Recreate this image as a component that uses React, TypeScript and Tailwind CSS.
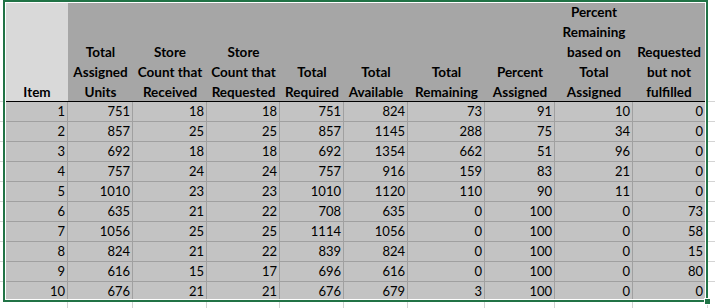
const colW = ["w-[62px]", "w-[65px]", "w-[74px]", "w-[73px]", "w-[64px]", "w-[64px]", "w-[77px]", "w-[70px]", "w-[78px]", "w-[72px]"];

const headers: string[][] = [
  ["Item"],
  ["Total", "Assigned", "Units"],
  ["Store", "Count that", "Received"],
  ["Store", "Count that", "Requested"],
  ["Total", "Required"],
  ["Total", "Available"],
  ["Total", "Remaining"],
  ["Percent", "Assigned"],
  ["Percent", "Remaining", "based on", "Total", "Assigned"],
  ["Requested", "but not", "fulfilled"],
];

const rows: number[][] = [
  [1, 751, 18, 18, 751, 824, 73, 91, 10, 0],
  [2, 857, 25, 25, 857, 1145, 288, 75, 34, 0],
  [3, 692, 18, 18, 692, 1354, 662, 51, 96, 0],
  [4, 757, 24, 24, 757, 916, 159, 83, 21, 0],
  [5, 1010, 23, 23, 1010, 1120, 110, 90, 11, 0],
  [6, 635, 21, 22, 708, 635, 0, 100, 0, 73],
  [7, 1056, 25, 25, 1114, 1056, 0, 100, 0, 58],
  [8, 824, 21, 22, 839, 824, 0, 100, 0, 15],
  [9, 616, 15, 17, 696, 616, 0, 100, 0, 80],
  [10, 676, 21, 21, 676, 679, 3, 100, 0, 0],
];

const stubW = ["w-[68px]", "w-[65px]", "w-[74px]", "w-[73px]", "w-[64px]", "w-[64px]", "w-[77px]", "w-[70px]", "w-[78px]", "w-[75px]"];

// gridlines peeking out around the selection
function SideStrip({ width }: { width: string }) {
  return (
    <div className={`${width} flex flex-col shrink-0`}>
      <div className="h-[102px] border-b border-[#d4d4d4]" />
      {Array.from({ length: 9 }).map((_, i) => (
        <div key={i} className="h-[20px] border-b border-[#d4d4d4]" />
      ))}
    </div>
  );
}

export default function App() {
  return (
    <div className="relative w-[715px] h-[308px] overflow-hidden bg-white text-black font-[Lato,sans-serif]">
      <div className="flex h-[302px]">
        <SideStrip width="w-[3px]" />

        {/* Selected range */}
        <div className="w-[705px] h-[302px] shrink-0 border-2 border-[#217346]">
          <div className="h-full border border-white overflow-hidden">
            {/* Header */}
            <div className="flex h-[99px] border-b border-black">
              {headers.map((lines, i) => (
                <div
                  key={i}
                  className={`${colW[i]} shrink-0 flex flex-col justify-end items-center ${i === 0 ? "bg-[#d9d9d9]" : "bg-[#a6a6a6]"}`}
                >
                  <div className="mb-[-1px] text-center text-[13.5px] font-bold leading-[20px] whitespace-nowrap">
                    {lines.map((l, j) => (
                      <div key={j}>{l}</div>
                    ))}
                  </div>
                </div>
              ))}
            </div>

            {/* Data rows */}
            {rows.map((r, ri) => (
              <div key={ri} className="flex h-[20px] border-b border-[#a0a0a0] bg-[#c3c3c3]">
                {r.map((v, ci) => (
                  <div
                    key={ci}
                    className={`${colW[ci]} shrink-0 ${ci < 9 ? "border-r border-[#a0a0a0]" : ""} text-right pr-[2px] text-[13px] leading-[19px]`}
                  >
                    {v}
                  </div>
                ))}
              </div>
            ))}
          </div>
        </div>

        <SideStrip width="w-[7px]" />
      </div>

      {/* Row below the selection */}
      <div className="flex h-[6px]">
        {stubW.map((w, i) => (
          <div key={i} className={`${w} shrink-0 border-r border-[#d4d4d4]`} />
        ))}
      </div>

      {/* Fill handle */}
      <div className="absolute left-[704px] top-[298px] w-[7px] h-[7px] border border-white bg-[#217346]" />
    </div>
  );
}
